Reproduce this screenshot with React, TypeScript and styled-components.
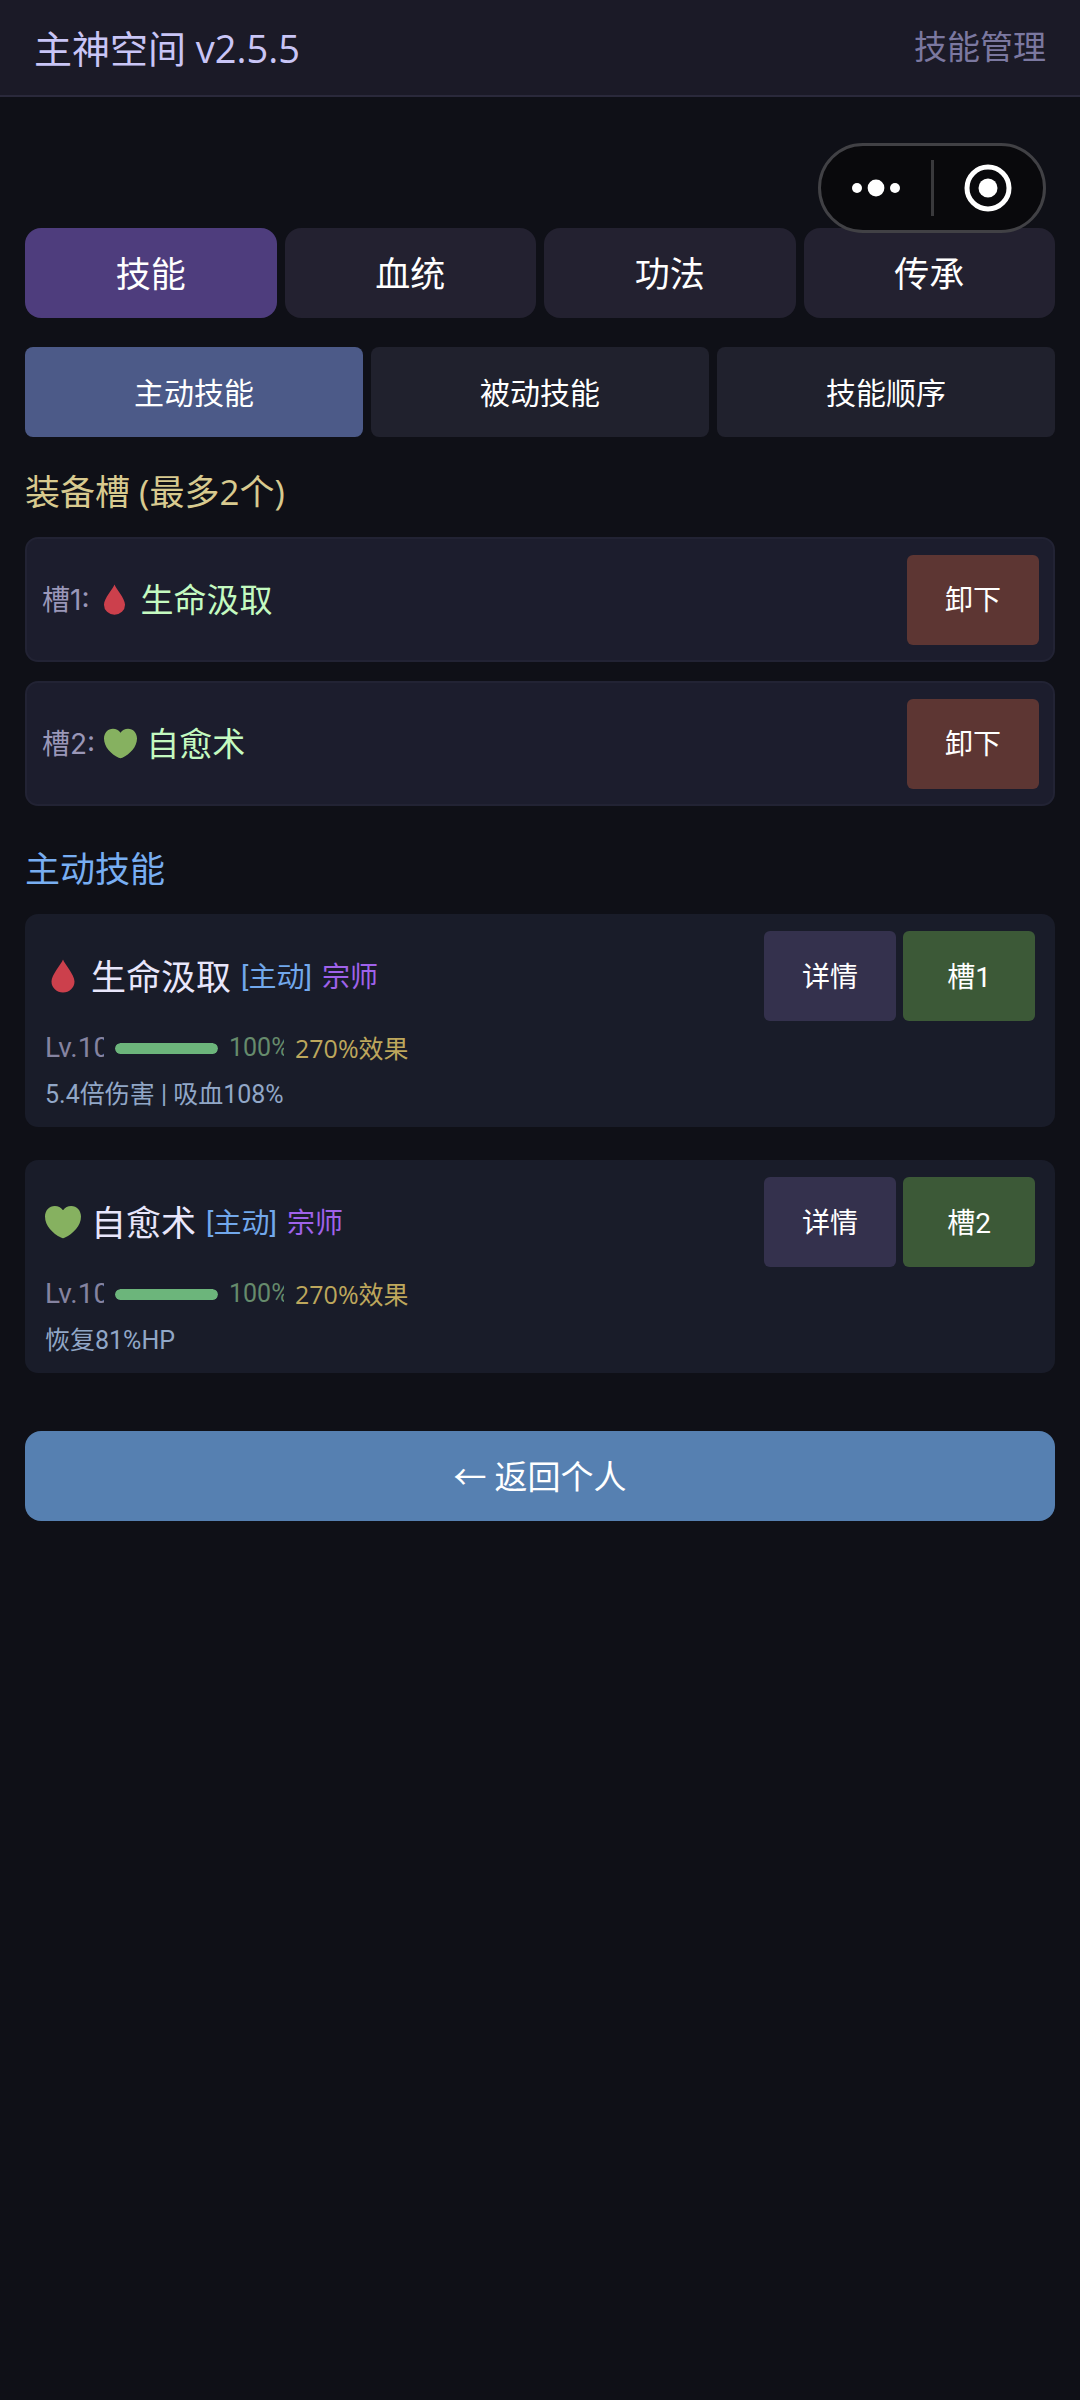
import React, { useState } from "react";
import styled, { createGlobalStyle } from "styled-components";

const GlobalStyle = createGlobalStyle`
  *, *::before, *::after { box-sizing: border-box; }
  html { background: #0f1017; }
  body {
    margin: 0;
    background: #0f1017;
    color: #ffffff;
    font-family: Roboto, "Noto Sans CJK SC", sans-serif;
  }
  h1, h2, h3, p, ul { margin: 0; padding: 0; font-weight: 400; }
  ul { list-style: none; }
  button { font-family: inherit; cursor: pointer; }
`;

const wideLatin = `"Open Sans", "Noto Sans CJK SC", sans-serif`;

const Page = styled.div`
  position: relative;
  min-height: 100vh;
`;

const Header = styled.header`
  display: flex;
  align-items: center;
  justify-content: space-between;
  height: 97px;
  padding: 0 34px;
  background: #1b1a27;
  border-bottom: 2px solid #2a293b;
`;

const AppTitle = styled.h1`
  font-family: ${wideLatin};
  font-size: 38px;
  line-height: 50px;
  color: #c9c5f6;
`;

const PageName = styled.span`
  font-size: 33px;
  line-height: 50px;
  color: #7b78a0;
`;

const Main = styled.main`
  display: flex;
  flex-direction: column;
  padding: 131px 25px 40px;
`;

const Capsule = styled.div`
  position: absolute;
  top: 143px;
  right: 34px;
  display: flex;
  align-items: center;
  width: 228px;
  height: 90px;
  border: 3px solid #414145;
  border-radius: 45px;
  background: #09090c;
`;

const CapsuleButton = styled.button`
  display: flex;
  flex: 1;
  align-items: center;
  justify-content: center;
  height: 100%;
  padding: 0;
  border: 0;
  background: transparent;
`;

const CapsuleDivider = styled.span`
  width: 3px;
  height: 56px;
  background: #39393c;
`;

const TabRow = styled.nav`
  display: flex;
  gap: 8px;
`;

const SubTabRow = styled(TabRow)`
  margin-top: 29px;
`;

const Button = styled.button`
  display: flex;
  align-items: center;
  justify-content: center;
  height: 90px;
  padding: 0 0 3px;
  border: 0;
  color: #ffffff;
`;

const Tab = styled(Button)<{ $active: boolean }>`
  flex: 1;
  border-radius: 16px;
  background: ${(p) => (p.$active ? "#4e3d7d" : "#232130")};
  font-size: 35px;
`;

const SubTab = styled(Button)<{ $active: boolean }>`
  flex: 1;
  border-radius: 8px;
  background: ${(p) => (p.$active ? "#4c5a88" : "#20212d")};
  font-size: 30px;
`;

const ActionButton = styled(Button)<{ $tone: "remove" | "detail" | "equip" }>`
  width: 132px;
  border-radius: 6px;
  background: ${(p) =>
    ({ remove: "#5d3633", detail: "#34314d", equip: "#3c5937" })[p.$tone]};
  font-size: 28px;
`;

const BackButton = styled(Button)`
  margin-top: 58px;
  border-radius: 16px;
  background: #5680b1;
  font-size: 33px;
`;

const Heading = styled.h2<{ $tone: "gold" | "blue" }>`
  margin: ${(p) => (p.$tone === "gold" ? "30px" : "38px")} 0 20px;
  font-family: ${wideLatin};
  font-size: 35px;
  line-height: 50px;
  color: ${(p) => (p.$tone === "gold" ? "#d8ca8f" : "#78aef2")};
`;

const SlotList = styled.ul`
  display: flex;
  flex-direction: column;
  gap: 19px;
`;

const Slot = styled.li`
  display: flex;
  align-items: center;
  justify-content: space-between;
  height: 125px;
  padding: 0 14px 0 15px;
  border: 2px solid #222334;
  border-radius: 13px;
  background: #1c1d2d;
`;

const SlotInfo = styled.div`
  display: flex;
  align-items: center;
  gap: 9px;
`;

const SlotLabel = styled.span`
  padding-bottom: 3px;
  font-family: Inter, "Noto Sans CJK SC", sans-serif;
  font-size: 28px;
  color: #9a97b8;
`;

const SlotSkill = styled.span`
  padding-bottom: 3px;
  font-size: 33px;
  color: #c4fac0;
`;

const SkillList = styled.ul`
  display: flex;
  flex-direction: column;
  gap: 33px;
`;

const SkillCard = styled.li`
  padding: 17px 20px;
  border-radius: 13px;
  background: #191c29;
`;

const SkillTop = styled.div`
  display: flex;
  align-items: center;
  justify-content: space-between;
`;

const SkillTitle = styled.div`
  display: flex;
  align-items: center;
  gap: 10px;
`;

const SkillName = styled.h3`
  padding-bottom: 3px;
  font-size: 35px;
  color: #e8e6fb;
`;

const Tag = styled.span<{ $tone: "kind" | "rank" }>`
  padding-bottom: 3px;
  font-size: 28px;
  color: ${(p) => (p.$tone === "kind" ? "#72a8ec" : "#9f62ea")};
`;

const Actions = styled.div`
  display: flex;
  gap: 7px;
`;

const LevelRow = styled.div`
  display: flex;
  align-items: center;
  gap: 11px;
  margin-top: 11px;
  line-height: 32px;
`;

const Level = styled.span`
  width: 59px;
  overflow: hidden;
  white-space: nowrap;
  font-size: 28px;
  color: #8583a0;
`;

const Track = styled.div`
  width: 103px;
  height: 11px;
  overflow: hidden;
  border-radius: 6px;
  background: #2a2d3d;
`;

const Fill = styled.div`
  height: 100%;
  border-radius: 6px;
  background: #6cb57b;
`;

const Percent = styled.span`
  width: 55px;
  overflow: hidden;
  white-space: nowrap;
  font-size: 25px;
  color: #668b6c;
`;

const Effect = styled.span`
  font-family: ${wideLatin};
  font-size: 25px;
  color: #bda75c;
`;

const Description = styled.p`
  margin-top: 16px;
  font-size: 25px;
  line-height: 30px;
  color: #91a7c7;
`;

type IconKind = "drop" | "heart";

const Drawing = styled.svg`
  display: block;
  flex: none;
`;

function SkillIcon({ kind, size }: { kind: IconKind; size: number }) {
  return (
    <Drawing width={size} height={size} viewBox="0 0 36 36" aria-hidden="true">
      {kind === "drop" ? (
        <path
          fill="#cc404c"
          d="M18 1.5C19.4 6 29.5 16.5 29.5 23.6A11.5 10.9 0 0 1 6.5 23.6C6.5 16.5 16.6 6 18 1.5Z"
        />
      ) : (
        <path
          fill="#86b160"
          d="M18 6.2C19.8 3.6 23 2 26.2 2C31.8 2 36 6.6 36 12.6C36 21.8 28.2 29.8 20 33.6C18.6 34.3 17.4 34.3 16 33.6C7.8 29.8 0 21.8 0 12.6C0 6.6 4.2 2 9.8 2C13 2 16.2 3.6 18 6.2Z"
        />
      )}
    </Drawing>
  );
}

interface Skill {
  name: string;
  icon: IconKind;
  level: number;
  progress: number;
  effect: string;
  description: string;
}

const skills: Skill[] = [
  {
    name: "生命汲取",
    icon: "drop",
    level: 10,
    progress: 100,
    effect: "270%效果",
    description: "5.4倍伤害 | 吸血108%",
  },
  {
    name: "自愈术",
    icon: "heart",
    level: 10,
    progress: 100,
    effect: "270%效果",
    description: "恢复81%HP",
  },
];

const tabs = ["技能", "血统", "功法", "传承"];
const subTabs = ["主动技能", "被动技能", "技能顺序"];

export default function App() {
  const [tab, setTab] = useState(0);
  const [subTab, setSubTab] = useState(0);

  return (
    <Page>
      <GlobalStyle />
      <Header>
        <AppTitle>主神空间 v2.5.5</AppTitle>
        <PageName>技能管理</PageName>
      </Header>
      <Main>
        <TabRow>
          {tabs.map((label, i) => (
            <Tab key={label} type="button" $active={i === tab} onClick={() => setTab(i)}>
              {label}
            </Tab>
          ))}
        </TabRow>
        <SubTabRow>
          {subTabs.map((label, i) => (
            <SubTab key={label} type="button" $active={i === subTab} onClick={() => setSubTab(i)}>
              {label}
            </SubTab>
          ))}
        </SubTabRow>

        <Heading $tone="gold">装备槽 (最多2个)</Heading>
        <SlotList>
          {skills.map((skill, i) => (
            <Slot key={skill.name}>
              <SlotInfo>
                <SlotLabel>{`槽${i + 1}:`}</SlotLabel>
                <SkillIcon kind={skill.icon} size={33} />
                <SlotSkill>{skill.name}</SlotSkill>
              </SlotInfo>
              <ActionButton type="button" $tone="remove">
                卸下
              </ActionButton>
            </Slot>
          ))}
        </SlotList>

        <Heading $tone="blue">主动技能</Heading>
        <SkillList>
          {skills.map((skill, i) => (
            <SkillCard key={skill.name}>
              <SkillTop>
                <SkillTitle>
                  <SkillIcon kind={skill.icon} size={36} />
                  <SkillName>{skill.name}</SkillName>
                  <Tag $tone="kind">[主动]</Tag>
                  <Tag $tone="rank">宗师</Tag>
                </SkillTitle>
                <Actions>
                  <ActionButton type="button" $tone="detail">
                    详情
                  </ActionButton>
                  <ActionButton type="button" $tone="equip">
                    {`槽${i + 1}`}
                  </ActionButton>
                </Actions>
              </SkillTop>
              <LevelRow>
                <Level>{`Lv.${skill.level}`}</Level>
                <Track
                  role="progressbar"
                  aria-label={skill.name}
                  aria-valuemin={0}
                  aria-valuemax={100}
                  aria-valuenow={skill.progress}
                >
                  <Fill style={{ width: `${skill.progress}%` }} />
                </Track>
                <Percent>{`${skill.progress}%`}</Percent>
                <Effect>{skill.effect}</Effect>
              </LevelRow>
              <Description>{skill.description}</Description>
            </SkillCard>
          ))}
        </SkillList>

        <BackButton type="button">← 返回个人</BackButton>
      </Main>

      <Capsule>
        <CapsuleButton type="button" aria-label="更多">
          <Drawing width="48" height="18" viewBox="0 0 48 18" fill="#ffffff">
            <circle cx="5" cy="9" r="5" />
            <circle cx="24" cy="9" r="8.4" />
            <circle cx="43" cy="9" r="5" />
          </Drawing>
        </CapsuleButton>
        <CapsuleDivider />
        <CapsuleButton type="button" aria-label="关闭">
          <Drawing width="48" height="48" viewBox="0 0 48 48">
            <circle cx="24" cy="24" r="21" fill="none" stroke="#ffffff" strokeWidth="5" />
            <circle cx="24" cy="24" r="9.5" fill="#ffffff" />
          </Drawing>
        </CapsuleButton>
      </Capsule>
    </Page>
  );
}
